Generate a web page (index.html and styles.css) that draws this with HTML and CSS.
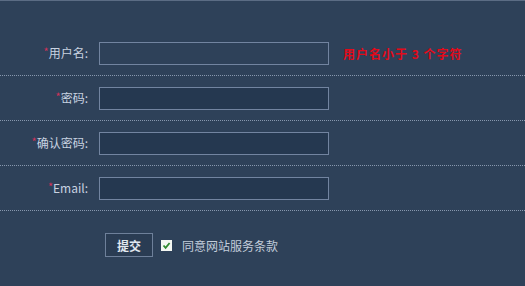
FILE: index.html
```html
<!DOCTYPE html>
<html lang="zh">
<head>
<meta charset="utf-8">
<link rel="stylesheet" href="styles.css">
</head>
<body>
<div class="panel">
  <form class="form">
    <div class="row">
      <label class="label"><span class="req">*</span>用户名:</label>
      <input class="field field-light" type="text">
      <span class="error">用户名小于 3 个字符</span>
    </div>
    <div class="row">
      <label class="label"><span class="req">*</span>密码:</label>
      <input class="field" type="password">
    </div>
    <div class="row">
      <label class="label"><span class="req">*</span>确认密码:</label>
      <input class="field" type="password">
    </div>
    <div class="row">
      <label class="label"><span class="req">*</span>Email:</label>
      <input class="field" type="text">
    </div>
    <div class="actions">
      <button class="submit" type="button">提交</button>
      <span class="check"><svg viewBox="0 0 11 11" width="11" height="11"><rect x="0" y="0" width="11" height="11" fill="#f4f7f2"/><path d="M2.5 5.5 L4.6 7.8 L8.6 3" fill="none" stroke="#2f8a2f" stroke-width="1.8"/></svg></span>
      <span class="agree">同意网站服务条款</span>
    </div>
  </form>
</div>
</body>
</html>
```
FILE: styles.css
```css
html, body {
  margin: 0;
  padding: 0;
  background: #2e4159;
}
body {
  width: 525px;
  height: 286px;
  overflow: hidden;
  font-family: "Noto Sans CJK SC", "Liberation Sans", sans-serif;
  font-size: 12px;
}
.panel {
  height: 285px;
  border-top: 1px solid #5b6c84;
  background: #2e4159;
}
.form {
  padding-top: 30px;
}
.row {
  height: 44px;
  display: flex;
  align-items: center;
  border-bottom: 1px dotted #8797ae;
}
.label {
  width: 88px;
  text-align: right;
  color: #c9d3e1;
  font-size: 12px;
  line-height: 14px;
  margin-right: 11px;
  flex: none;
}
.req {
  color: #d2325a;
  font-size: 11px;
  position: relative;
  top: -2px;
}
.field {
  box-sizing: border-box;
  width: 230px;
  height: 23px;
  margin: 0;
  border: 1px solid #7284a0;
  background: #253850;
  color: #fff;
  outline: none;
  flex: none;
}
.field-light {
  background: #2e4159;
}
.error {
  margin-left: 14px;
  color: #e30a1a;
  font-weight: bold;
  font-size: 12px;
  letter-spacing: 1px;
}
.actions {
  display: flex;
  align-items: center;
  padding-top: 22px;
  padding-left: 105px;
}
.submit {
  box-sizing: border-box;
  width: 48px;
  height: 24px;
  border: 1px solid #6e809a;
  background: #2a3c53;
  color: #e2e8f0;
  font-family: "Noto Sans CJK SC", sans-serif;
  font-size: 12px;
  font-weight: bold;
  padding: 0;
}
.check {
  display: flex;
  margin-left: 8px;
  margin-right: 10px;
}
.agree {
  color: #c3cddb;
  font-size: 12px;
}
```
